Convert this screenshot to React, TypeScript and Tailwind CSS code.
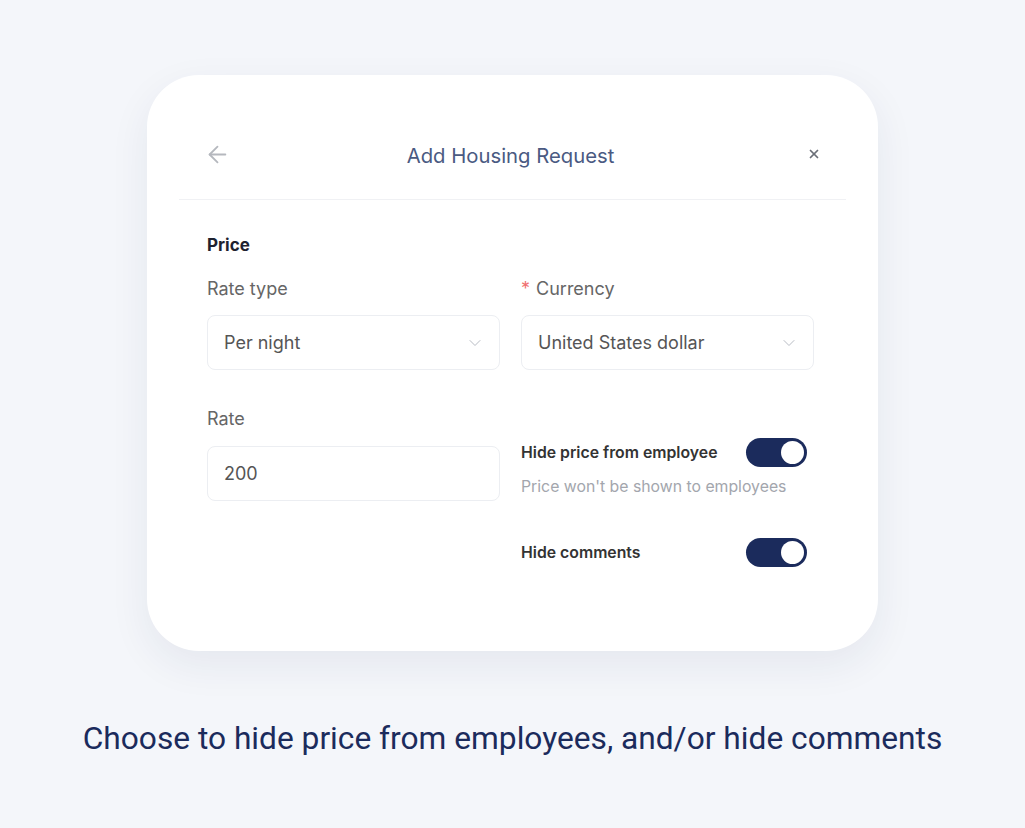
import { ArrowLeft, ChevronDown, X } from "lucide-react";

type ToggleProps = {
    on: boolean;
};

function Toggle({ on }: ToggleProps) {
    return (
        <span
            className={`flex h-[29px] w-[61px] shrink-0 items-center rounded-full px-[3px] ${
                on ? "justify-end bg-[#1b2b5c]" : "justify-start bg-[#d5d9e2]"
            }`}
        >
            <span className="h-[23px] w-[23px] rounded-full bg-white" />
        </span>
    );
}

function SelectBox({ value }: { value: string }) {
    return (
        <div className="flex h-[55px] items-center justify-between rounded-lg border border-[#eceef2] bg-white pl-[16px] pr-[14px]">
            <span className="text-[18px] text-[#555]">{value}</span>
            <ChevronDown className="h-[20px] w-[20px] text-[#b8bcc4]" strokeWidth={1.2} />
        </div>
    );
}

export default function App() {
    return (
        <div className="flex min-h-[828px] flex-col items-center bg-[#f4f6fa] pt-[75px]">
            <div
                className="h-[576px] w-[731px] rounded-[52px] bg-white shadow-[0_14px_40px_rgba(30,40,80,0.07)]"
                style={{ fontFamily: "Inter, 'Liberation Sans', sans-serif" }}
            >
                <div className="mx-[32px] grid grid-cols-[1fr_auto_1fr] items-center border-b border-[#f0f1f4] pb-[29px] pl-[21px] pr-[25px] pt-[67px]">
                    <ArrowLeft className="-mt-[4px] ml-[4px] h-[27px] w-[27px] text-[#b5b8be]" strokeWidth={1.6} />
                    <span className="text-[20.3px] leading-[28px] text-[#4a5a82]">Add Housing Request</span>
                    <X className="-mt-[4px] h-[14px] w-[14px] justify-self-end text-[#6b6f78]" strokeWidth={3} />
                </div>

                <div className="pl-[60px] pr-[64px] pt-[33px]">
                    <div className="text-[17px] font-bold leading-[24px] text-[#1e2230]">Price</div>

                    <div className="mt-[20px] grid grid-cols-2 gap-x-[21px]">
                        <div>
                            <div className="text-[18px] leading-[24px] text-[#666]">Rate type</div>
                            <div className="mt-[14px]">
                                <SelectBox value="Per night" />
                            </div>
                        </div>
                        <div>
                            <div className="text-[18px] leading-[24px] text-[#666]">
                                <span className="mr-[6px] text-[#f07070]">*</span>Currency
                            </div>
                            <div className="mt-[14px]">
                                <SelectBox value="United States dollar" />
                            </div>
                        </div>

                        <div className="pt-[37px]">
                            <div className="text-[18px] leading-[24px] text-[#666]">Rate</div>
                            <div className="mt-[15px] flex h-[55px] items-center rounded-lg border border-[#eceef2] bg-white pl-[16px]">
                                <span className="text-[18px] text-[#555]">200</span>
                            </div>
                        </div>
                        <div className="pt-[68px]">
                            <div className="flex items-center justify-between pr-[7px]">
                                <span className="text-[15.8px] font-semibold text-[#333]">Hide price from employee</span>
                                <Toggle on />
                            </div>
                            <div className="mt-[10px] text-[15.8px] leading-[20px] text-[#a3a6ad]">
                                Price won't be shown to employees
                            </div>
                            <div className="mt-[41px] flex items-center justify-between pr-[7px]">
                                <span className="text-[15.8px] font-semibold text-[#333]">Hide comments</span>
                                <Toggle on />
                            </div>
                        </div>
                    </div>
                </div>
            </div>

            <p
                className="mt-[70px] text-[31.7px] leading-[36px] text-[#1b2b5c]"
                style={{ fontFamily: "Roboto, 'Liberation Sans', sans-serif" }}
            >
                Choose to hide price from employees, and/or hide comments
            </p>
        </div>
    );
}
